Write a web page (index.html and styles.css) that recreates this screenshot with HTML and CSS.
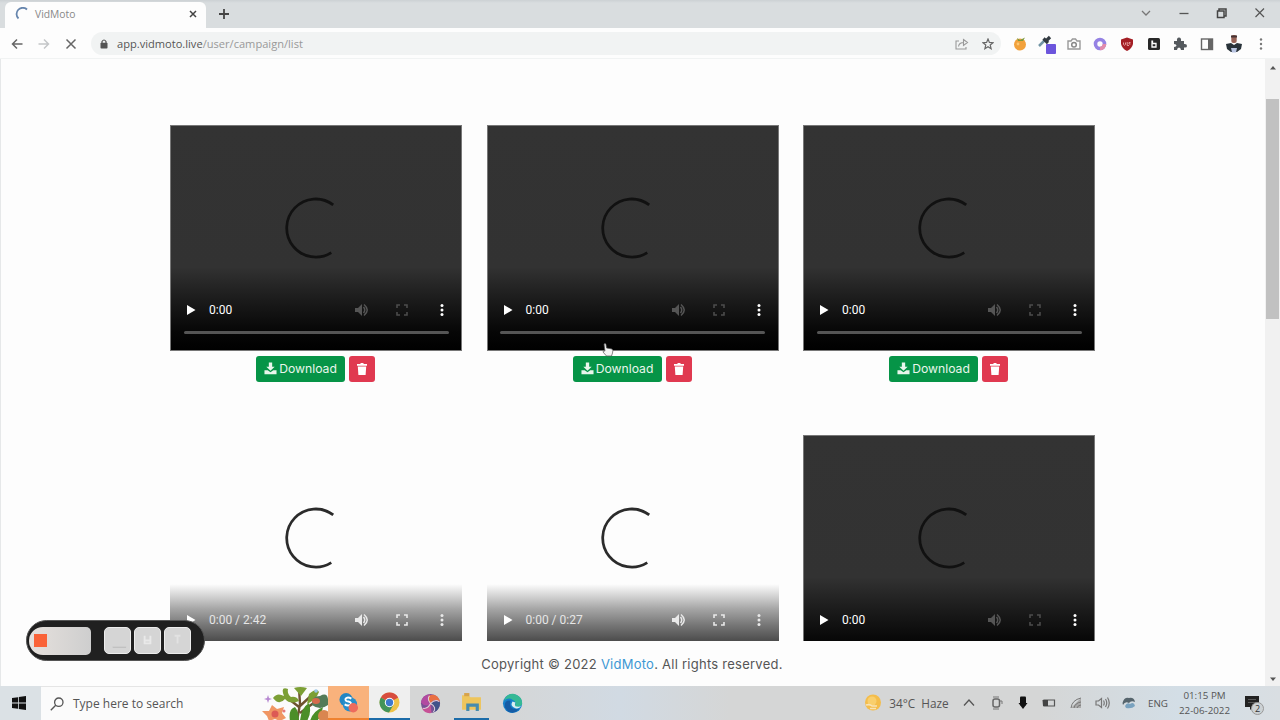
FILE: index.html
```html
<!DOCTYPE html>
<html lang="en">
<head>
    <meta charset="UTF-8">
    <meta name="viewport" content="width=device-width, initial-scale=1.0">
    <title>VidMoto</title>
    <link rel="stylesheet" href="styles.css">
</head>
<body>

<!-- Shared icons -->
<svg class="defs" width="0" height="0">
    <symbol id="spinner" viewBox="0 0 64 64">
        <path d="M49 9 A29.5 29.5 0 1 0 47 57.5" fill="none" stroke="currentColor" stroke-width="2.8"/>
    </symbol>
    <symbol id="play" viewBox="0 0 10 12"><path d="M1 1 L9.5 6 L1 11 Z" fill="currentColor"/></symbol>
    <symbol id="volume" viewBox="0 0 14 14">
        <path d="M0 5 H3 L7 1 V13 L3 9 H0 Z" fill="currentColor"/>
        <path d="M8.5 4 Q11 7 8.5 10 M9 1.5 Q15.5 7 9 12.5" fill="none" stroke="currentColor" stroke-width="1.5"/>
    </symbol>
    <symbol id="full" viewBox="0 0 12 12">
        <path d="M1 4 V1 H4 M8 1 H11 V4 M11 8 V11 H8 M4 11 H1 V8" fill="none" stroke="currentColor" stroke-width="1.6"/>
    </symbol>
    <symbol id="dots" viewBox="0 0 4 14">
        <circle cx="2" cy="2.5" r="1.5" fill="currentColor"/><circle cx="2" cy="7" r="1.5" fill="currentColor"/><circle cx="2" cy="11.5" r="1.5" fill="currentColor"/>
    </symbol>
    <symbol id="download" viewBox="0 0 14 14">
        <path d="M5.2 .5 H8.8 V5 H11.5 L7 9.5 L2.5 5 H5.2 Z M0.5 9 H4 L7 11 L10 9 H13.5 V13.2 H0.5 Z" fill="currentColor"/>
    </symbol>
    <symbol id="trash" viewBox="0 0 12 14">
        <path d="M1 2 H4 L5 1 H7 L8 2 H11 V3.8 H1 Z M1.8 4.4 H10.2 L9.6 13 H2.4 Z" fill="currentColor"/>
    </symbol>
</svg>

<div class="tabs">
    <div class="tab">
        <svg class="tab-spinner" viewBox="0 0 14 14"><path d="M3.5 11.5 A6 6 0 0 1 12 2.5" fill="none" stroke="#6685ad" stroke-width="1.8"/></svg>
        <span class="tab-title">VidMoto</span>
        <svg class="tab-close" viewBox="0 0 8 8"><path d="M1 1 L7 7 M7 1 L1 7" stroke="#444" stroke-width="1.5"/></svg>
    </div>
    <svg class="new-tab" viewBox="0 0 10 10"><path d="M5 0 V10 M0 5 H10" stroke="#444" stroke-width="1.8"/></svg>
    <div class="window-buttons">
        <svg viewBox="0 0 12 12"><path d="M2 4 L6 8 L10 4" fill="none" stroke="#777" stroke-width="1.3"/></svg>
        <svg viewBox="0 0 12 12"><path d="M1.5 6.5 H10.5" stroke="#555" stroke-width="1.3"/></svg>
        <svg viewBox="0 0 12 12"><path d="M1.5 4 H8 V10.5 H1.5 Z M3 3.5 V2 H10 V9 H8.5" fill="none" stroke="#444" stroke-width="1.5"/></svg>
        <svg viewBox="0 0 12 12"><path d="M1.5 1.5 L10 10 M10 1.5 L1.5 10" stroke="#555" stroke-width="1.2"/></svg>
    </div>
</div>

<div class="toolbar">
    <div class="nav">
        <svg viewBox="0 0 12 12"><path d="M11.5 6 H1.5 M6 1.5 L1.5 6 L6 10.5" fill="none" stroke="#666" stroke-width="1.5"/></svg>
        <svg viewBox="0 0 12 12"><path d="M.5 6 H10.5 M6 1.5 L10.5 6 L6 10.5" fill="none" stroke="#c4c6c8" stroke-width="1.5"/></svg>
        <svg viewBox="0 0 12 12"><path d="M1.5 1.5 L10.5 10.5 M10.5 1.5 L1.5 10.5" stroke="#666" stroke-width="1.5"/></svg>
    </div>
    <div class="address">
        <svg class="lock" viewBox="0 0 8 10"><path d="M2 4 V2.5 Q4 -.5 6 2.5 V4" fill="none" stroke="#555" stroke-width="1.2"/><rect x=".5" y="3.8" width="7" height="5.7" rx=".8" fill="#555"/></svg>
        <span class="url"><b>app.vidmoto.live</b>/user/campaign/list</span>
        <svg class="share" viewBox="0 0 14 12"><path d="M4 3 H1 V11 H11 V9 M3.5 8.5 Q4 4.5 9 4.5 M8.5 1.5 L12.5 4.5 L8.5 7.5 Z" fill="none" stroke="#999" stroke-width="1.1"/></svg>
        <svg class="star" viewBox="0 0 12 12"><path d="M6 1 L7.4 4.4 L11 4.7 L8.2 7 L9.1 10.7 L6 8.7 L2.9 10.7 L3.8 7 L1 4.7 L4.6 4.4 Z" fill="none" stroke="#666" stroke-width="1.2"/></svg>
    </div>
    <div class="extensions">
        <svg viewBox="0 0 16 16"><circle cx="8" cy="8.5" r="6" fill="#f2a13c"/><path d="M5 2 L8 4 L13 1.5 L11 5 H6 Z" fill="#7e9a3c"/><circle cx="6" cy="8" r="1.4" fill="#fbc873"/></svg>
        <svg class="picker" viewBox="0 0 18 20"><path d="M1 12 L8 5" stroke="#7194a4" stroke-width="2.5"/><path d="M5.5 4.5 L10 9 M8 7 L12 3" stroke="#333b42" stroke-width="3.2"/><rect x="8" y="10" width="10" height="10" rx="1" fill="#6c55dc"/></svg>
        <svg viewBox="0 0 16 16"><path d="M2 5 H5 L6.5 3 H9.5 L11 5 H14 V13 H2 Z" fill="none" stroke="#999" stroke-width="1.4"/><circle cx="8" cy="8.7" r="2.3" fill="none" stroke="#888" stroke-width="1.5"/></svg>
        <svg viewBox="0 0 16 16"><circle cx="8" cy="8" r="4.5" fill="none" stroke="#9582e4" stroke-width="3.6"/><path d="M8 12.5 A4.5 4.5 0 0 0 12.5 8" fill="none" stroke="#e38cab" stroke-width="3.6"/></svg>
        <svg viewBox="0 0 16 16"><path d="M8 1.5 L14 3.5 V8 Q13 12.5 8 15 Q3 12.5 2 8 V3.5 Z" fill="#a41f25"/><path d="M4.5 6.5 V8.5 Q5.5 10 6.5 8.5 V6.5 M8.2 6 V9.5 H10 M11.5 6.5 H10 V8 H11.5" fill="none" stroke="#e49b9b" stroke-width="1"/></svg>
        <svg viewBox="0 0 16 16"><rect x="2" y="2" width="12" height="12" rx="1.5" fill="#282828"/><path d="M6 4.5 V11 H10 V7.5 H6.5 V4.5" fill="none" stroke="#fff" stroke-width="1.3"/></svg>
        <svg viewBox="0 0 16 16"><path d="M2 5 H5 Q4.5 1.5 7 1.5 Q9.5 1.5 9 5 H12 V8 Q15 7.5 15 10 Q15 12 12 11.5 V14 H9 Q8.8 11.5 7 11.5 Q5.2 11.5 5 14 H2 V11 Q4.5 10.5 4.5 9.5 Q4.5 8 2 8 Z" fill="#555a5e"/></svg>
        <svg viewBox="0 0 16 16"><rect x="2.5" y="3" width="11" height="10.5" fill="none" stroke="#666" stroke-width="1.4"/><rect x="9" y="3" width="4.5" height="10.5" fill="#666"/></svg>
        <svg class="avatar" viewBox="0 0 18 20"><rect x="6.3" y="1" width="5.4" height="8" rx="2" fill="#976357"/><path d="M6 1.5 H12 V3.5 H6 Z" fill="#443333"/><path d="M1 10 L6 9 L9 11 L12 9 L17 10 L16 15 L12 18 H6 L2 15 Z" fill="#29333a"/><path d="M6 14 H12 L11 18.5 H7 Z" fill="#b9c5e2"/></svg>
        <svg viewBox="0 0 16 16"><circle cx="8" cy="3.5" r="1.2" fill="#777"/><circle cx="8" cy="8" r="1.2" fill="#777"/><circle cx="8" cy="12.5" r="1.2" fill="#777"/></svg>
    </div>
</div>

<div class="viewport">
    <div class="page">
        <div class="campaigns">
            <div class="campaign">
                <div class="video">
                    <svg class="spinner"><use href="#spinner"/></svg>
                    <div class="controls"><svg class="play"><use href="#play"/></svg><span class="time">0:00</span><svg class="volume"><use href="#volume"/></svg><svg class="full"><use href="#full"/></svg><svg class="dots"><use href="#dots"/></svg></div>
                    <div class="timeline"></div>
                </div>
                <div class="actions"><button class="btn download"><svg><use href="#download"/></svg>Download</button><button class="btn delete"><svg><use href="#trash"/></svg></button></div>
            </div>
            <div class="campaign">
                <div class="video">
                    <svg class="spinner"><use href="#spinner"/></svg>
                    <div class="controls"><svg class="play"><use href="#play"/></svg><span class="time">0:00</span><svg class="volume"><use href="#volume"/></svg><svg class="full"><use href="#full"/></svg><svg class="dots"><use href="#dots"/></svg></div>
                    <div class="timeline"></div>
                </div>
                <div class="actions"><button class="btn download"><svg><use href="#download"/></svg>Download</button><button class="btn delete"><svg><use href="#trash"/></svg></button></div>
            </div>
            <div class="campaign">
                <div class="video">
                    <svg class="spinner"><use href="#spinner"/></svg>
                    <div class="controls"><svg class="play"><use href="#play"/></svg><span class="time">0:00</span><svg class="volume"><use href="#volume"/></svg><svg class="full"><use href="#full"/></svg><svg class="dots"><use href="#dots"/></svg></div>
                    <div class="timeline"></div>
                </div>
                <div class="actions"><button class="btn download"><svg><use href="#download"/></svg>Download</button><button class="btn delete"><svg><use href="#trash"/></svg></button></div>
            </div>
            <div class="campaign">
                <div class="video loaded">
                    <svg class="spinner"><use href="#spinner"/></svg>
                    <div class="controls"><svg class="play"><use href="#play"/></svg><span class="time">0:00 / 2:42</span><svg class="volume"><use href="#volume"/></svg><svg class="full"><use href="#full"/></svg><svg class="dots"><use href="#dots"/></svg></div>
                </div>
            </div>
            <div class="campaign">
                <div class="video loaded">
                    <svg class="spinner"><use href="#spinner"/></svg>
                    <div class="controls"><svg class="play"><use href="#play"/></svg><span class="time">0:00 / 0:27</span><svg class="volume"><use href="#volume"/></svg><svg class="full"><use href="#full"/></svg><svg class="dots"><use href="#dots"/></svg></div>
                </div>
            </div>
            <div class="campaign">
                <div class="video">
                    <svg class="spinner"><use href="#spinner"/></svg>
                    <div class="controls"><svg class="play"><use href="#play"/></svg><span class="time">0:00</span><svg class="volume"><use href="#volume"/></svg><svg class="full"><use href="#full"/></svg><svg class="dots"><use href="#dots"/></svg></div>
                </div>
            </div>
        </div>
        <footer>Copyright © 2022 <a>VidMoto</a>. All rights reserved.</footer>
    </div>
    <div class="scrollbar">
        <svg viewBox="0 0 8 5"><path d="M1 4.5 L4 1 L7 4.5 Z" fill="#555"/></svg>
        <div class="thumb"></div>
        <svg class="down" viewBox="0 0 8 5"><path d="M1 .5 L4 4 L7 .5 Z" fill="#555"/></svg>
    </div>
</div>

<div class="taskbar">
    <div class="start">
        <svg viewBox="0 0 14 14"><path d="M0 2 L6 1.2 V6.6 H0 Z M6.8 1 L14 0 V6.6 H6.8 Z M0 7.4 H6 V12.8 L0 12 Z M6.8 7.4 H14 V14 L6.8 13 Z" fill="#111"/></svg>
    </div>
    <div class="search">
        <svg class="search-icon" viewBox="0 0 14 14"><circle cx="8.8" cy="5.2" r="4.2" fill="none" stroke="#555" stroke-width="1.3"/><path d="M5.7 8.3 L.8 13.2" stroke="#555" stroke-width="1.4"/></svg>
        <span>Type here to search</span>
        <svg class="flowers" viewBox="0 0 66 34">
            <path d="M35 34 L38 17 L37 1 M37 20 L23 9 M38 19 L50 8 M38 26 L57 12" fill="none" stroke="#6d5230" stroke-width="2.4"/>
            <path d="M11 11 Q15 5 22 9 Q18 -1 26 2 Q25 7 29 10 Q35 9 37 14 Q28 18 23 12 Q17 19 11 11 Z M32 1 Q38 -1 45 1 L39 9 Z M47 7 Q55 0 57 5 Q54 13 45 17 Z" fill="#7c9f35"/>
            <path d="M28 34 Q26 22 33 20 Q37 25 37 34 Z M38 34 Q39 21 47 16 Q50 26 45 34 Z M48 34 Q51 24 61 20 Q59 30 55 34 Z" fill="#4b8e28"/>
            <path d="M13 32 L7 34 L5 29 L0 24 L7 24 L10 18 L15 22 L22 20 L20 26 L24 31 L18 34 Z" fill="#f09664"/>
            <circle cx="13" cy="27" r="3.5" fill="#dc5955"/>
            <path d="M50 18 Q49 9 58 9 Q65 5 66 12 V18 Q58 24 50 18 Z" fill="#547b58"/>
            <ellipse cx="54" cy="14" rx="4" ry="3" fill="#d66b4c"/><circle cx="62" cy="29" r="6" fill="#d98650"/>
            <path d="M6 8 L7 11 L10 12 L7 13 L6 16 L5 13 L2 12 L5 11 Z" fill="#b788d1"/><circle cx="54" cy="4" r="1.8" fill="#99c7e9"/><circle cx="22" cy="24" r="1.5" fill="#e6787f"/>
        </svg>
    </div>
    <div class="apps">
        <div class="app skype"><svg viewBox="0 0 22 22"><circle cx="8.5" cy="8" r="7" fill="#2186c4"/><circle cx="12.5" cy="13" r="7.5" fill="#278fcb"/><path d="M14 7 Q10 4.5 8 7 Q7 9.5 11 10 Q15 11 13 13.5 Q10 15 7 13" fill="none" stroke="#fff" stroke-width="2"/><circle cx="16" cy="16.5" r="5" fill="#ed6b5c"/></svg></div>
        <div class="app chrome"><svg viewBox="0 0 20 20"><circle cx="10" cy="10" r="9.5" fill="#eec248"/><path d="M10 10 L1.8 5.2 A9.5 9.5 0 0 1 18.3 5.2 Z" fill="#d84d3f"/><path d="M10 10 L1.8 5.2 A9.5 9.5 0 0 0 9.5 19.5 L14 12 Z" fill="#43945a"/><circle cx="10" cy="10" r="4.5" fill="#fff"/><circle cx="10" cy="10" r="3.5" fill="#3c79cf"/></svg></div>
        <div class="app"><svg viewBox="0 0 22 22"><circle cx="11" cy="11" r="10" fill="#795095"/><path d="M1 10 Q2 2 11 1 Q5 7 11 12 Q5 15 1 10 Z" fill="#b24aa1"/><path d="M9 3 Q18 -1 21 9 Q15 5 11 11 Q7 8 9 3 Z" fill="#e96f43"/><path d="M21 10 Q21 18 13 21 Q17 15 11 11 Q17 7 21 10 Z" fill="#41528a"/><path d="M12 21 Q5 22 2 16 Q8 17 11 11" fill="#c75196"/><path d="M11 11 Q7 6 10 3 M11 11 Q16 6 20 9 M11 11 Q18 15 14 20 M11 11 Q8 17 3 16" fill="none" stroke="#e1ced9" stroke-width="1.1"/></svg></div>
        <div class="app explorer"><svg viewBox="0 0 20 20"><path d="M1 3 H7 L9 5 H19 V17 H1 Z" fill="#eec55c"/><path d="M3 1 H8 V4 H3 Z" fill="#d7a34a"/><path d="M5 18 V11 H17 V18 H14 V14 H8 V18 Z" fill="#468bae"/></svg></div>
        <div class="app"><svg viewBox="0 0 22 22"><circle cx="11" cy="11" r="10" fill="#1680cb"/><path d="M2 8 Q5 0 13 1 Q22 4 21 12 Q18 16 13 14 Q16 9 11 7 Q7 4 2 8 Z" fill="#35b995"/><path d="M3 15 Q2 7 9 8 Q6 18 18 17 Q12 23 6 19 Z" fill="#155ca5"/><path d="M11 9 Q8 14 14 16 Q18 17 20 14 Q17 15 14 14 Q13 12 14 10 Z" fill="#d9eef0"/></svg></div>
    </div>
    <div class="tray">
        <div class="weather"><svg viewBox="0 0 18 18"><circle cx="9" cy="8.5" r="8" fill="#f4bd4b"/><circle cx="8" cy="7" r="4.5" fill="#f9cf6d"/><path d="M2 11 Q6 10 8 12 H13 M6 14.5 H12" fill="none" stroke="#f8e3b6" stroke-width="1.6"/></svg><span>34°C&nbsp; Haze</span></div>
        <svg viewBox="0 0 16 16"><path d="M3 10.5 L8 5 L13 10.5" fill="none" stroke="#555" stroke-width="1.3"/></svg>
        <svg viewBox="0 0 16 16"><rect x="5" y="4" width="6.5" height="8" rx="2" fill="none" stroke="#666" stroke-width="1.5"/><path d="M5 2 H11 M5 14 H11 M12 6 H14 V9" fill="none" stroke="#777"/></svg>
        <svg viewBox="0 0 16 16"><rect x="5" y="1.5" width="6" height="9" rx="1" fill="#111"/><path d="M3.5 8 L8 14 L12.5 8 Z" fill="#111"/></svg>
        <svg viewBox="0 0 16 16"><path d="M3 5 H13.5 V11 H3 Z" fill="none" stroke="#555" stroke-width="1.2"/><path d="M1.5 5 H7 V11 H2 Z" fill="#444"/></svg>
        <svg viewBox="0 0 16 16"><path d="M3 13 L13 3 V13 Z" fill="#aaa"/><path d="M3 13 Q4 5 13 3 M6 13 Q7 8 13 7 M9 13 Q10 10 13 10" fill="none" stroke="#777"/></svg>
        <svg viewBox="0 0 16 16"><path d="M1 6 H3.5 L6.5 3.5 V12.5 L3.5 10 H1 Z M8.5 5.5 Q10 8 8.5 10.5 M10.5 4 Q13 8 10.5 12 M12.5 2.5 Q16 8 12.5 13.5" fill="none" stroke="#777" stroke-width="1.2"/></svg>
        <svg viewBox="0 0 16 16"><path d="M1.5 8 Q3 2 8 3 Q13 2 14 7 Q10 5 8 8 Q4 6 2 10 Z" fill="#56656d"/><path d="M4 11 Q6 7 9 9 Q13 6 14 11 Q11 14 5 13" fill="#79a2bf"/></svg>
        <span class="lang">ENG</span>
        <div class="clock"><span>01:15 PM</span><span>22-06-2022</span></div>
        <div class="notice"><svg viewBox="0 0 14 14"><path d="M0 0 H14 V11 H8 L5 14 V11 H0 Z" fill="#222"/><path d="M3 3.5 H11 M3 6.5 H11" stroke="#666" stroke-width=".8"/></svg><span class="badge">2</span></div>
    </div>
</div>

<!-- Screen recorder controls -->
<div class="recorder">
    <div class="rec-main"><div class="stop"></div></div>
    <div class="rec-btn"><svg viewBox="0 0 26 26"><path d="M8 20 H22" stroke="#b9b9b9"/></svg></div>
    <div class="rec-btn"><svg viewBox="0 0 26 26"><path d="M10 8 V16 H16 V8 M11 13 H15" fill="none" stroke="#e9e9e9" stroke-width="2"/></svg></div>
    <div class="rec-btn"><svg viewBox="0 0 26 26"><path d="M10 8 H16 M13 8 V16" fill="none" stroke="#e2e2e2" stroke-width="2"/></svg></div>
</div>

<svg class="cursor" viewBox="0 0 12 14"><path d="M2 1 Q3.5 0 4 1.5 L4.5 5 L10 6 Q11.5 7 10.5 10 L9.5 13 H4.5 L1 9 Q1 7.5 3 8 Z" fill="#f4f4f4" stroke="#555" stroke-width=".7"/></svg>

</body>
</html>
```
FILE: styles.css
```css
* {
    box-sizing: border-box;
}
body {
    margin: 0;
    width: 1280px;
    height: 720px;
    display: flex;
    flex-direction: column;
    overflow: hidden;
    background-color: #fdfdfd;
    font-family: "Open Sans", sans-serif;
    color: #555;
}
svg {
    display: block;
    flex-shrink: 0;
}
.defs {
    position: absolute;
}

/* Browser window */
.tabs {
    height: 28px;
    display: flex;
    align-items: center;
    background: linear-gradient(#ccd1d4, #d9dddf 3px);
    padding-left: 5px;
    flex-shrink: 0;
}
.tab {
    width: 201px;
    height: 26px;
    margin-top: 2px;
    padding: 0 9px 2px 10px;
    display: flex;
    align-items: center;
    background-color: #fdfdfd;
    border-radius: 6px 6px 0 0;
}
.tab-spinner {
    width: 14px;
    height: 14px;
}
.tab-title {
    margin-left: 6px;
    flex: 1;
    font-size: 10.3px;
    color: #888;
}
.tab-close {
    width: 8px;
    height: 8px;
}
.new-tab {
    width: 10px;
    height: 10px;
    margin-left: 13px;
}
.window-buttons {
    margin-left: auto;
    display: flex;
    gap: 26px;
    padding: 0 14px 2px 0;
}
.window-buttons svg {
    width: 12px;
    height: 12px;
}
.toolbar {
    height: 31px;
    display: flex;
    align-items: center;
    padding: 1px 6px 0 11px;
    background-color: #fdfdfd;
    border-bottom: 1px solid #f1f3f3;
    flex-shrink: 0;
}
.nav {
    display: flex;
    gap: 15px;
    width: 80px;
}
.nav svg {
    width: 12px;
    height: 12px;
}
.address {
    width: 910px;
    height: 23px;
    padding: 0 7px 0 9px;
    display: flex;
    align-items: center;
    border-radius: 12px;
    background-color: #f1f3f3;
}
.lock {
    width: 8px;
    height: 10px;
}
.url {
    margin-left: 9px;
    flex: 1;
    font-size: 11.1px;
    color: #999;
}
.url b {
    font-weight: normal;
    color: #555;
}
.share {
    width: 14px;
    height: 12px;
    margin-right: 13px;
}
.star {
    width: 12px;
    height: 12px;
}
.extensions {
    margin-left: auto;
    display: flex;
    align-items: center;
    width: 267px;
    justify-content: space-around;
}
.extensions svg {
    width: 16px;
    height: 16px;
}
.extensions .picker,
.extensions .avatar {
    width: 18px;
    height: 20px;
    margin: 0 -1px;
}

/* Campaign list */
.viewport {
    height: 627px;
    display: flex;
    flex-shrink: 0;
}
.page {
    flex: 1;
    display: flex;
    flex-direction: column;
    border-left: 1px solid #e6e8e9;
}
.campaigns {
    height: 582px;
    overflow: hidden;
    padding: 66px 170px 0 169px;
    display: grid;
    grid-template-columns: repeat(3, 292px);
    grid-auto-rows: 310px;
    justify-content: space-between;
    flex-shrink: 0;
}
.video {
    height: 226px;
    padding: 70px 12px 0;
    display: flex;
    flex-direction: column;
    align-items: center;
    color: #fff;
    background: linear-gradient(#333 0, #323232 63%, #1c1c1c 77%, #060606 92%, #000 100%);
    border: 1px solid #777;
}
.video .spinner {
    width: 63px;
    height: 63px;
    color: #111;
}
.controls {
    width: 100%;
    height: 18px;
    margin-top: 42px;
    padding: 0 5px 0 3px;
    display: flex;
    align-items: center;
}
.play {
    width: 10px;
    height: 12px;
    margin-right: 13px;
}
.time {
    flex: 1;
    font-family: Roboto, sans-serif;
    font-size: 12px;
}
.volume {
    width: 14px;
    height: 14px;
    color: #555;
}
.full {
    width: 12px;
    height: 12px;
    margin: 0 32px 0 27px;
    color: #4c4c4c;
}
.dots {
    width: 4px;
    height: 14px;
}
.timeline {
    width: 265px;
    height: 3px;
    margin-top: 12px;
    background-color: #555;
    border-radius: 2px;
}
.loaded {
    border: none;
    padding: 71px 13px 0;
    background: linear-gradient(#fdfdfd 66%, #d5d5d5 71%, #a5a5a5 77%, #777 84%, #4d4d4d 91%, #333 100%);
}
.loaded .spinner {
    color: #2b2b2b;
}
.loaded .time {
    color: #e6e6e6;
}
.loaded .volume,
.loaded .full,
.loaded .dots {
    color: #e9e9e9;
}
.actions {
    display: flex;
    justify-content: center;
    gap: 4px;
    margin: 5px 1px 0 0;
}
.btn {
    height: 26px;
    border: none;
    border-radius: 3px;
    padding: 0 0 1px;
    display: flex;
    align-items: center;
    justify-content: center;
    gap: 2px;
    color: #e9f6ec;
    font-family: Inter, sans-serif;
    font-size: 12.2px;
}
.download {
    width: 89px;
    background-color: #069447;
}
.download svg {
    width: 13px;
    height: 13px;
}
.delete {
    width: 26px;
    background-color: #e03950;
    color: #fff;
}
.delete svg {
    width: 12px;
    height: 14px;
}
footer {
    padding: 13px 2px 0 0;
    text-align: center;
    font-family: Inter, sans-serif;
    font-size: 13px;
    line-height: 20px;
    letter-spacing: .25px;
}
footer a {
    color: #3c98d4;
}
.scrollbar {
    width: 15px;
    display: flex;
    flex-direction: column;
    align-items: center;
    padding: 6px 0 4px;
    background-color: #f1f1f1;
}
.scrollbar svg {
    width: 8px;
    height: 5px;
}
.thumb {
    width: 13px;
    height: 220px;
    margin-top: 29px;
    background-color: #c1c1c1;
}
.scrollbar .down {
    margin-top: auto;
}

/* Windows taskbar */
.taskbar {
    height: 34px;
    display: flex;
    background: linear-gradient(90deg, #d5d6d6 500px, #d1dae3 620px, #d5d6d6 730px, #d5d6d6 1040px, #d3dee6 1180px, #d9dee2);
    flex-shrink: 0;
}
.start {
    width: 41px;
    display: flex;
    align-items: center;
    justify-content: center;
    padding-right: 3px;
    background-color: #dbe1e5;
}
.start svg {
    width: 14px;
    height: 14px;
}
.search {
    width: 287px;
    padding-left: 9px;
    display: flex;
    align-items: center;
    background-color: #fbfbfb;
    border-top: 1px solid #e5e5e5;
    font-size: 12px;
}
.search-icon {
    width: 14px;
    height: 14px;
}
.search span {
    margin-left: 9px;
    flex: 1;
}
.flowers {
    width: 66px;
    height: 34px;
}
.apps {
    display: flex;
}
.app {
    width: 41px;
    display: flex;
    align-items: center;
    justify-content: center;
}
.app svg {
    width: 21px;
    height: 21px;
}
.skype {
    background-color: #f9b27c;
    border-bottom: 2px solid #ef8230;
}
.chrome {
    background-color: #efefef;
    border-bottom: 2px solid #1c6ca9;
}
.explorer {
    width: 35px;
    margin: 0 3px;
    border-bottom: 2px solid #1c6ca9;
}
.tray {
    margin-left: auto;
    padding-right: 15px;
    display: flex;
    align-items: center;
    font-size: 11.8px;
}
.tray > svg {
    width: 16px;
    height: 16px;
    margin-right: 10.7px;
}
.weather {
    width: 97px;
    display: flex;
    align-items: center;
    gap: 7px;
    white-space: nowrap;
}
.weather svg {
    width: 18px;
    height: 18px;
}
.lang {
    width: 30px;
    font-size: 9.8px;
}
.clock {
    width: 53px;
    display: flex;
    flex-direction: column;
    align-items: center;
    font-size: 9.8px;
    line-height: 15px;
}
.notice {
    position: relative;
    width: 20px;
    margin-left: 14px;
}
.notice svg {
    width: 14px;
    height: 14px;
}
.badge {
    position: absolute;
    left: 6px;
    top: 6px;
    width: 13px;
    height: 13px;
    border-radius: 50%;
    background-color: #ccd1d4;
    border: 1px solid #999;
    font-size: 9px;
    line-height: 11px;
    text-align: center;
    color: #333;
}

/* Overlays */
.recorder {
    position: absolute;
    left: 26px;
    top: 620px;
    width: 179px;
    height: 41px;
    padding: 0 12px 0 2px;
    display: flex;
    align-items: center;
    gap: 3px;
    border-radius: 21px;
    background-color: #202020;
    border: 1px solid #555;
}
.rec-main {
    width: 62px;
    height: 28px;
    margin-right: 10px;
    padding: 7px 0 0 5px;
    border-radius: 14px 5px 5px 14px;
    background: linear-gradient(90deg, #e6e1dd, #cecece);
}
.stop {
    width: 13px;
    height: 13px;
    background-color: #fa6338;
}
.rec-btn {
    width: 27px;
    height: 27px;
    border-radius: 5px;
    background-color: #d5d5d5;
    border: 1px solid #ededed;
}
.cursor {
    position: absolute;
    left: 602px;
    top: 343px;
    width: 12px;
    height: 14px;
}
```
